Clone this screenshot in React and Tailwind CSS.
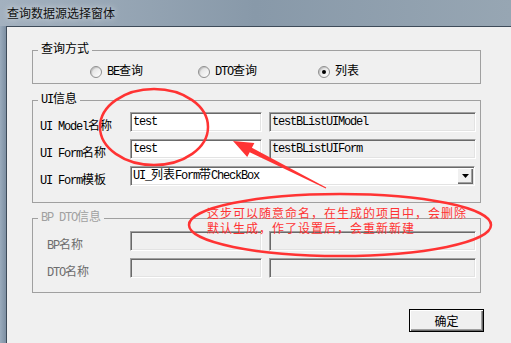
import React from 'react';

const mono = "[font-family:'Liberation_Mono','Noto_Sans_CJK_SC',monospace]";
const sans = "[font-family:'Noto_Sans_CJK_SC','Noto_Sans',sans-serif]";

// SimSun-style half-width latin: 12px mono squeezed to 6px per char
function L({ children }) {
  return <span className="tracking-[-1.2px]">{children}</span>;
}

function Radio({ checked, children, className }) {
  return (
    <div className={`flex h-[13px] items-center ${className || ''}`}>
      <span className="grid h-[12px] w-[12px] place-items-center rounded-full border border-[#8f8f8f] bg-linear-to-br from-[#dcdcdc] to-white shadow-[inset_1px_1px_1px_rgba(0,0,0,0.15)]">
        {checked && <span className="h-[4px] w-[4px] rounded-full bg-black" />}
      </span>
      <span className="ml-[5px] text-[12px] leading-[14px]">{children}</span>
    </div>
  );
}

function Field({ white, className, children }) {
  return (
    <div
      className={`flex h-[20px] items-center border border-t-[#a0a0a0] border-l-[#a0a0a0] border-r-white border-b-white pl-[2px] text-[12px] leading-[14px] shadow-[inset_1px_1px_0_#696969,inset_-1px_-1px_0_#e3e3e3] ${white ? 'bg-white' : 'bg-[#f0f0f0]'} ${className || ''}`}
    >
      {children}
    </div>
  );
}

function Group({ title, disabled, className, children }) {
  return (
    <fieldset className={`w-[449px] border border-[#a0a0a0] ${className || ''}`}>
      <legend className={`ml-[5px] px-[3px] text-[12px] leading-[14px] ${disabled ? 'text-[#a0a0a0]' : 'text-black'}`}>
        {title}
      </legend>
      {children}
    </fieldset>
  );
}

export default function App() {
  return (
    <div className={`relative flex h-[343px] w-[511px] flex-col overflow-hidden bg-[#8597aa] ${mono}`}>
      <div className="flex h-[26px] items-center bg-linear-to-r from-[#a3b1bf] via-[#8899a9] to-[#97a6b3] pl-[7px]">
        <span className={`text-[12px] leading-[14px] text-[#101010] [text-shadow:0_0_6px_rgba(255,255,255,0.8)] ${sans}`}>
          查询数据源选择窗体
        </span>
      </div>

      <div className="flex flex-1">
        <div className="w-[6px] bg-linear-to-r from-[#9aabbc] to-[#7e90a3]" />
        <div className="flex-1 border-t border-l border-[#3e4b59] bg-[#f0f0f0] pl-[25px] pt-[16px] text-black">
          <Group title="查询方式">
            <div className="flex pl-[57px] pt-[8px] pb-[5px]">
              <Radio className="w-[108px]"><L>BE</L>查询</Radio>
              <Radio className="w-[120px]"><L>DTO</L>查询</Radio>
              <Radio checked>列表</Radio>
            </div>
          </Group>

          <Group title={<><L>UI</L>信息</>} className="mt-[9px]">
            <div className="flex flex-col gap-[7px] pl-[7px] pt-[5px] pb-[16px]">
              <div className="flex h-[20px]">
                <div className="mt-[8px] w-[90px] text-[12px] leading-[14px]"><L>UI Model</L>名称</div>
                <Field white className="w-[132px]"><L>test</L></Field>
                <Field className="ml-[7px] w-[207px]"><L>testBListUIModel</L></Field>
              </div>
              <div className="flex h-[20px]">
                <div className="mt-[8px] w-[90px] text-[12px] leading-[14px]"><L>UI Form</L>名称</div>
                <Field white className="w-[132px]"><L>test</L></Field>
                <Field className="ml-[7px] w-[207px]"><L>testBListUIForm</L></Field>
              </div>
              <div className="flex h-[20px]">
                <div className="mt-[8px] w-[90px] text-[12px] leading-[14px]"><L>UI Form</L>模板</div>
                <Field white className="w-[345px] justify-between pr-[1px]">
                  <span><L>UI_</L>列表<L>Form</L>带<L>CheckBox</L></span>
                  <span className="grid h-[16px] w-[16px] place-items-center bg-[#f0f0f0] shadow-[inset_1px_1px_0_#ffffff,inset_-1px_-1px_0_#696969,inset_-2px_-2px_0_#a0a0a0]">
                    <svg width="7" height="4" viewBox="0 0 7 4"><path d="M0 0h7L3.5 4z" fill="#000" /></svg>
                  </span>
                </Field>
              </div>
            </div>
          </Group>

          <Group title={<><L>BP DTO</L>信息</>} disabled className="mt-[8px]">
            <div className="flex flex-col gap-[7px] pl-[14px] pt-[6px] pb-[14px] text-[#6d6d6d]">
              <div className="flex h-[20px]">
                <div className="mt-[8px] w-[83px] text-[12px] leading-[14px]"><L>BP</L>名称</div>
                <Field className="w-[132px]" />
                <Field className="ml-[7px] w-[207px]" />
              </div>
              <div className="flex h-[20px]">
                <div className="mt-[8px] w-[83px] text-[12px] leading-[14px]"><L>DTO</L>名称</div>
                <Field className="w-[132px]" />
                <Field className="ml-[7px] w-[207px]" />
              </div>
            </div>
          </Group>

          <div className="mt-[16px] flex w-[452px] justify-end">
            <button
              type="button"
              className={`h-[23px] w-[75px] border border-black bg-[#f0f0f0] text-[12px] leading-[14px] shadow-[inset_1px_1px_0_#ffffff,inset_-1px_-1px_0_#696969,inset_-2px_-2px_0_#a0a0a0] ${sans}`}
            >
              确定
            </button>
          </div>
        </div>
      </div>

      {/* red annotation drawn on top of the screenshot */}
      <div className={`absolute left-[207px] top-[205px] whitespace-nowrap text-[12px] leading-[15px] tracking-[1px] text-[#ff3333] ${sans}`}>
        <div>这步可以随意命名，在生成的项目中，会删除</div>
        <div>默认生成，作了设置后，会重新新建</div>
      </div>
      <svg className="pointer-events-none absolute left-0 top-0" width="511" height="343" viewBox="0 0 511 343">
        <ellipse cx="154" cy="127" rx="54" ry="38" fill="none" stroke="#ff3333" strokeWidth="2.5" />
        <ellipse cx="340" cy="225" rx="151" ry="31" fill="none" stroke="#ff3333" strokeWidth="2.5" />
        <polygon
          points="233,141 254.4,142.9 251.9,147.8 326.2,187.5 325.8,188.5 249.7,152.2 247.2,157.1"
          fill="#ff3333"
        />
      </svg>
    </div>
  );
}
